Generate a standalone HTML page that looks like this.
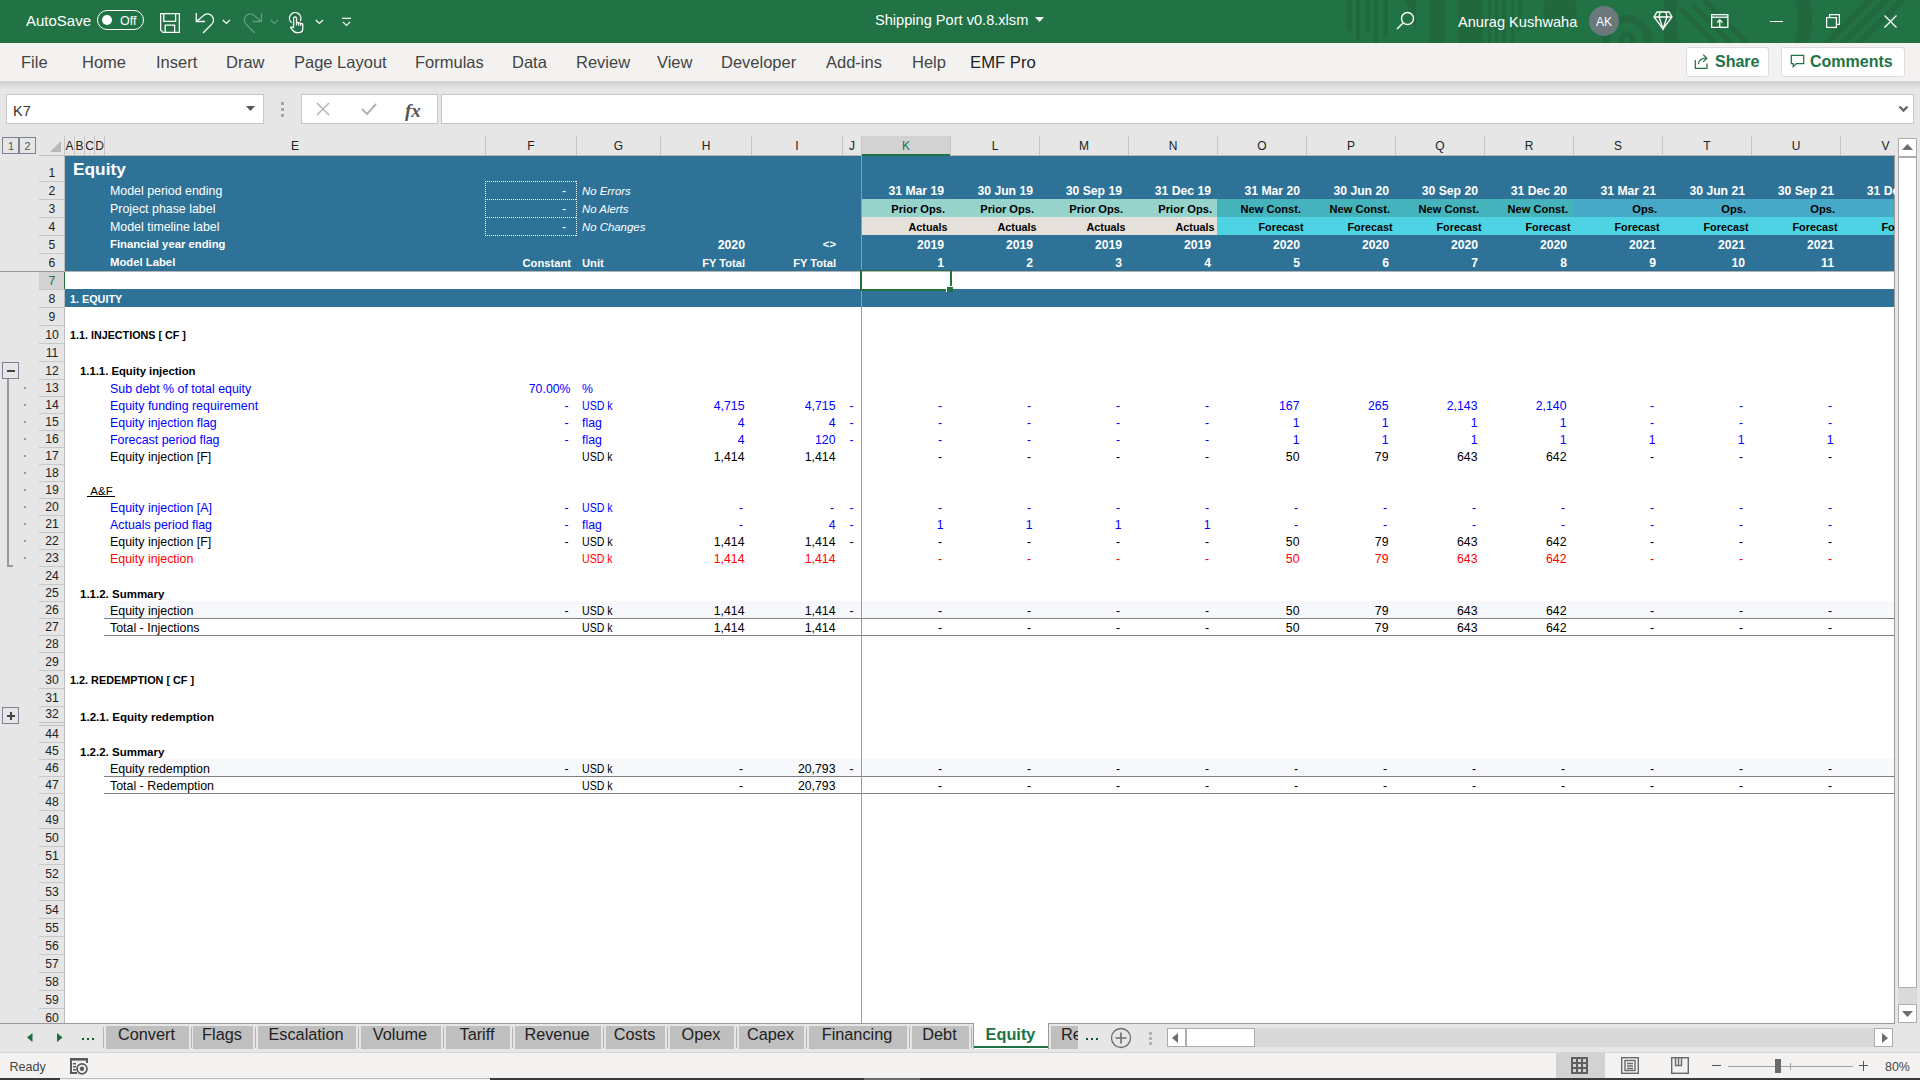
<!DOCTYPE html><html><head><meta charset="utf-8"><style>
html,body{margin:0;padding:0;width:1920px;height:1080px;overflow:hidden;background:#fff;font-family:"Liberation Sans", sans-serif;}
.t{position:absolute;white-space:pre;line-height:1;}
.r{position:absolute;}
svg{position:absolute;overflow:visible;}
</style></head><body>
<div class="r" style="left:0px;top:0px;width:1920px;height:43px;background:#217346;"></div>
<svg style="left:0;top:0" width="1920" height="43"><defs><clipPath id="tb"><rect x="0" y="0" width="1920" height="43"/></clipPath></defs><g clip-path="url(#tb)" fill="#22683f" stroke="none"><rect x="1347" y="0" width="5" height="31"/><rect x="1356" y="0" width="4" height="40"/><rect x="1365" y="0" width="5" height="31"/><rect x="1374" y="0" width="4" height="43"/><rect x="1383" y="0" width="5" height="37"/><path d="M1405 0 H1416 L1416 30 Z"/><rect x="1429" y="0" width="16" height="43"/><rect x="1458" y="0" width="25" height="43"/><rect x="1488" y="0" width="3" height="43"/><rect x="1495" y="0" width="3" height="43"/><rect x="1502" y="0" width="4" height="43"/><rect x="1511" y="0" width="3" height="43"/><rect x="1518" y="0" width="4" height="30"/><circle cx="1560" cy="10" r="17"/></g><g clip-path="url(#tb)" fill="none" stroke="#22683f"><circle cx="1627" cy="40" r="21" stroke-width="8"/><circle cx="1627" cy="40" r="6" stroke-width="6"/><circle cx="1737" cy="20" r="68" stroke-width="14"/><path d="M1680 8 L1720 48 M1692 4 L1736 48 M1704 0 L1752 48" stroke-width="5"/><path d="M1822 48 L1880 -10 M1838 48 L1896 -10 M1854 48 L1912 -10" stroke-width="6"/></g></svg>
<div class="t" style="top:12.90px;font-size:15.0px;color:#fff;left:26px;">AutoSave</div>
<div class="r" style="left:97px;top:10px;width:47px;height:20px;border:1.5px solid #fff;border-radius:11px;box-sizing:border-box;"></div>
<div class="r" style="left:102px;top:15px;width:10px;height:10px;border-radius:50%;background:#fff;"></div>
<div class="t" style="top:15.42px;font-size:12.5px;color:#fff;left:120px;">Off</div>
<svg style="left:160px;top:13px" width="21" height="21" viewBox="0 0 21 21"><g fill="none" stroke="#fff" stroke-width="1.3"><path d="M0.65 0.65 H19.35 V19.35 H3 L0.65 17 Z"/><path d="M3.8 0.65 V8.4 H15.6 V0.65"/><path d="M5.2 19.35 V12.1 H14.6 V19.35"/></g></svg>
<svg style="left:195px;top:12px" width="22" height="22" viewBox="0 0 22 22"><g fill="none" stroke="#fff" stroke-width="1.3"><path d="M1.8 9.3 L8.1 3.9 A6 6 0 1 1 16.2 12.7 L8 21"/><path d="M1.3 1 V9.5 H10"/></g></svg>
<svg style="left:222px;top:19px" width="9" height="6" viewBox="0 0 9 6"><path d="M0.8 1 L4.4 4.5 L8 1" fill="none" stroke="#fff" stroke-width="1.2"/></svg>
<svg style="left:243px;top:12px" width="22" height="22" viewBox="0 0 22 22"><g fill="none" stroke="#5f9e7a" stroke-width="1.3"><path d="M18 9.3 L11.7 3.9 A6 6 0 1 0 3.6 12.7 L11.8 21"/><path d="M18.5 1 V9.5 H9.8"/></g></svg>
<svg style="left:270px;top:19px" width="9" height="6" viewBox="0 0 9 6"><path d="M0.8 1 L4.4 4.5 L8 1" fill="none" stroke="#5f9e7a" stroke-width="1.2"/></svg>
<svg style="left:280px;top:8px" width="30" height="30" viewBox="0 0 30 30"><g fill="none" stroke="#fff" stroke-width="1.25" stroke-linecap="round" stroke-linejoin="round"><path d="M11.3 14.4 A5.7 5.7 0 1 1 20.4 12.6"/><path d="M13.6 19.2 V10.3 A1.45 1.45 0 0 1 16.5 10.3 V16.8 M16.5 15.4 A1.05 1.05 0 0 1 18.6 15.4 V17 M18.6 15.9 A1.05 1.05 0 0 1 20.7 15.9 V17.4 M20.7 16.4 A1.05 1.05 0 0 1 22.8 16.4 V20.5 Q22.8 24.6 18.6 24.6 H17 Q14.4 24.6 12.4 22 L10.6 19.6 Q11.6 18.2 13.6 19.6"/></g></svg>
<svg style="left:315px;top:19px" width="9" height="6" viewBox="0 0 9 6"><path d="M0.8 1 L4.4 4.5 L8 1" fill="none" stroke="#fff" stroke-width="1.2"/></svg>
<svg style="left:342px;top:17px" width="10" height="10" viewBox="0 0 10 10"><g fill="none" stroke="#fff" stroke-width="1.2"><path d="M0 1.3 H9"/><path d="M0.8 4.8 L4.5 8.5 L8.2 4.8"/></g></svg>
<div class="t" style="top:13.14px;font-size:14.6px;color:#fff;left:875px;">Shipping Port v0.8.xlsm</div>
<svg style="left:1035px;top:17px" width="9" height="6" viewBox="0 0 9 6"><path d="M0 0 H9 L4.5 5 Z" fill="#fff"/></svg>
<svg style="left:1396px;top:11px" width="20" height="20" viewBox="0 0 20 20"><g fill="none" stroke="#fff" stroke-width="1.4"><circle cx="11.5" cy="7.5" r="6"/><path d="M7.3 11.7 L1 18"/></g></svg>
<div class="t" style="top:14.84px;font-size:14.6px;color:#fff;left:1458px;">Anurag Kushwaha</div>
<div class="r" style="left:1589px;top:6px;width:30px;height:30px;border-radius:50%;background:#6b797d;"></div>
<div class="t" style="top:15.84px;font-size:12px;color:#fff;left:1304px;width:600px;text-align:center;">AK</div>
<svg style="left:1653px;top:11px" width="20" height="19" viewBox="0 0 20 19"><g fill="none" stroke="#fff" stroke-width="1.3"><path d="M4 1 H16 L19 6 L10 18 L1 6 Z"/><path d="M1 6 H19 M7 1 L6 6 L10 18 L14 6 L13 1"/></g></svg>
<svg style="left:1711px;top:14px" width="18" height="14" viewBox="0 0 18 14"><g fill="none" stroke="#fff" stroke-width="1.3"><rect x="0.65" y="0.65" width="16.2" height="12.7"/><path d="M0.65 3.2 H16.85"/><path d="M8.75 13 V6 M6 8.6 L8.75 5.8 L11.5 8.6"/></g></svg>
<div class="r" style="left:1770px;top:21px;width:13px;height:1px;background:#fff;"></div>
<svg style="left:1826px;top:14px" width="14" height="14" viewBox="0 0 14 14"><g fill="none" stroke="#fff" stroke-width="1.2"><rect x="0.6" y="3.6" width="9.8" height="9.8"/><path d="M3.6 3.6 V0.6 H13.4 V10.4 H10.4"/></g></svg>
<svg style="left:1884px;top:15px" width="13" height="13" viewBox="0 0 13 13"><g stroke="#fff" stroke-width="1.25"><path d="M0.5 0.5 L12.5 12.5 M12.5 0.5 L0.5 12.5"/></g></svg>
<div class="r" style="left:0px;top:43px;width:1920px;height:38px;background:#f3f2f1;"></div>
<div class="r" style="left:0;top:81px;width:1920px;height:8px;background:linear-gradient(#cfcecd,#e6e6e6);"></div>
<div class="t" style="top:54.03px;font-size:16.5px;color:#444;left:21px;">File</div>
<div class="t" style="top:54.03px;font-size:16.5px;color:#444;left:82px;">Home</div>
<div class="t" style="top:54.03px;font-size:16.5px;color:#444;left:156px;">Insert</div>
<div class="t" style="top:54.03px;font-size:16.5px;color:#444;left:226px;">Draw</div>
<div class="t" style="top:54.03px;font-size:16.5px;color:#444;left:294px;">Page Layout</div>
<div class="t" style="top:54.03px;font-size:16.5px;color:#444;left:415px;">Formulas</div>
<div class="t" style="top:54.03px;font-size:16.5px;color:#444;left:512px;">Data</div>
<div class="t" style="top:54.03px;font-size:16.5px;color:#444;left:576px;">Review</div>
<div class="t" style="top:54.03px;font-size:16.5px;color:#444;left:657px;">View</div>
<div class="t" style="top:54.03px;font-size:16.5px;color:#444;left:721px;">Developer</div>
<div class="t" style="top:54.03px;font-size:16.5px;color:#444;left:826px;">Add-ins</div>
<div class="t" style="top:54.03px;font-size:16.5px;color:#444;left:912px;">Help</div>
<div class="t" style="top:54.86px;font-size:16.7px;color:#222;left:970px;">EMF Pro</div>
<div class="r" style="left:1686px;top:47px;width:83px;height:30px;background:#fff;border:1px solid #dedcda;border-radius:3px;box-sizing:border-box;"></div>
<div class="r" style="left:1781px;top:47px;width:124px;height:30px;background:#fff;border:1px solid #dedcda;border-radius:3px;box-sizing:border-box;"></div>
<svg style="left:1694px;top:52px" width="17" height="18" viewBox="0 0 17 18"><g fill="none" stroke="#217346" stroke-width="1.25"><path d="M1.3 8 V16.3 H13 V11.5"/><path d="M4.3 12.3 Q5 6.2 12 6.2"/><path d="M9.2 2.6 L12.8 6.2 L9.2 9.8"/></g></svg>
<div class="t" style="top:54.26px;font-size:16px;font-weight:700;color:#217346;left:1715px;">Share</div>
<svg style="left:1790px;top:54px" width="16" height="15" viewBox="0 0 16 15"><g fill="none" stroke="#217346" stroke-width="1.25"><path d="M1.3 1.3 H13.7 V9.6 H6.3 L3.2 12.8 V9.6 H1.3 Z"/></g></svg>
<div class="t" style="top:54.26px;font-size:16px;font-weight:700;color:#217346;left:1810px;">Comments</div>
<div class="r" style="left:0px;top:89px;width:1920px;height:47px;background:#e6e6e6;"></div>
<div class="r" style="left:6px;top:94px;width:258px;height:30px;background:#fff;border:1px solid #c6c6c6;box-sizing:border-box;"></div>
<div class="t" style="top:103.64px;font-size:14.6px;color:#333;left:13px;">K7</div>
<svg style="left:246px;top:106px" width="9" height="5"><path d="M0 0 H9 L4.5 5 Z" fill="#555"/></svg>
<div class="r" style="left:281px;top:102px;width:3px;height:3px;background:#a6a6a6;"></div>
<div class="r" style="left:281px;top:108px;width:3px;height:3px;background:#a6a6a6;"></div>
<div class="r" style="left:281px;top:114px;width:3px;height:3px;background:#a6a6a6;"></div>
<div class="r" style="left:301px;top:94px;width:137px;height:30px;background:#fff;border:1px solid #c6c6c6;box-sizing:border-box;"></div>
<svg style="left:316px;top:102px" width="14" height="14"><path d="M1 1 L13 13 M13 1 L1 13" stroke="#b4b4b4" stroke-width="1.5"/></svg>
<svg style="left:361px;top:102px" width="16" height="14"><path d="M1 7 L6 12 L15 2" fill="none" stroke="#b4b4b4" stroke-width="2"/></svg>
<div class="t" style="top:101.42px;font-size:19px;color:#555;font-style:italic;left:405px;font-family:'Liberation Serif',serif;font-weight:700;">fx</div>
<div class="r" style="left:441px;top:94px;width:1473px;height:30px;background:#fff;border:1px solid #c6c6c6;box-sizing:border-box;"></div>
<svg style="left:1898px;top:105px" width="11" height="8"><path d="M1.5 1.5 L5.5 5.5 L9.5 1.5" fill="none" stroke="#666" stroke-width="2.4"/></svg>
<div class="r" style="left:0px;top:136px;width:1920px;height:20px;background:#e6e6e6;"></div>
<div class="r" style="left:2px;top:137px;width:34px;height:17px;border:1px solid #7b8391;box-sizing:border-box;"></div>
<div class="r" style="left:18px;top:137px;width:2px;height:17px;background:#7b8391;"></div>
<div class="t" style="top:140.86px;font-size:10.8px;color:#555;left:-289px;width:600px;text-align:center;">1</div>
<div class="t" style="top:140.86px;font-size:10.8px;color:#555;left:-272.5px;width:600px;text-align:center;">2</div>
<svg style="left:50px;top:141px" width="11" height="11"><path d="M11 0 V11 H0 Z" fill="#b7b7b7"/></svg>
<div class="r" style="left:39px;top:155px;width:25px;height:1px;background:#bdbdbd;"></div>
<div class="r" style="left:862px;top:136px;width:88px;height:18px;background:#d2d2d2;"></div>
<div class="r" style="left:74px;top:136px;width:1px;height:19px;background:#c6c6c6;"></div>
<div class="t" style="top:139.84px;font-size:12px;color:#222;left:-230.5px;width:600px;text-align:center;">A</div>
<div class="r" style="left:84px;top:136px;width:1px;height:19px;background:#c6c6c6;"></div>
<div class="t" style="top:139.84px;font-size:12px;color:#222;left:-220.5px;width:600px;text-align:center;">B</div>
<div class="r" style="left:94px;top:136px;width:1px;height:19px;background:#c6c6c6;"></div>
<div class="t" style="top:139.84px;font-size:12px;color:#222;left:-210.5px;width:600px;text-align:center;">C</div>
<div class="r" style="left:104px;top:136px;width:1px;height:19px;background:#c6c6c6;"></div>
<div class="t" style="top:139.84px;font-size:12px;color:#222;left:-200.5px;width:600px;text-align:center;">D</div>
<div class="r" style="left:485px;top:136px;width:1px;height:19px;background:#c6c6c6;"></div>
<div class="t" style="top:139.84px;font-size:12px;color:#222;left:-5.0px;width:600px;text-align:center;">E</div>
<div class="r" style="left:576px;top:136px;width:1px;height:19px;background:#c6c6c6;"></div>
<div class="t" style="top:139.84px;font-size:12px;color:#222;left:231.0px;width:600px;text-align:center;">F</div>
<div class="r" style="left:660px;top:136px;width:1px;height:19px;background:#c6c6c6;"></div>
<div class="t" style="top:139.84px;font-size:12px;color:#222;left:318.5px;width:600px;text-align:center;">G</div>
<div class="r" style="left:751px;top:136px;width:1px;height:19px;background:#c6c6c6;"></div>
<div class="t" style="top:139.84px;font-size:12px;color:#222;left:406.0px;width:600px;text-align:center;">H</div>
<div class="r" style="left:842px;top:136px;width:1px;height:19px;background:#c6c6c6;"></div>
<div class="t" style="top:139.84px;font-size:12px;color:#222;left:497.0px;width:600px;text-align:center;">I</div>
<div class="r" style="left:861px;top:136px;width:1px;height:19px;background:#c6c6c6;"></div>
<div class="t" style="top:139.84px;font-size:12px;color:#222;left:552.0px;width:600px;text-align:center;">J</div>
<div class="r" style="left:950px;top:136px;width:1px;height:19px;background:#c6c6c6;"></div>
<div class="t" style="top:139.84px;font-size:12px;color:#217346;left:606.0px;width:600px;text-align:center;">K</div>
<div class="r" style="left:1039px;top:136px;width:1px;height:19px;background:#c6c6c6;"></div>
<div class="t" style="top:139.84px;font-size:12px;color:#222;left:695.0px;width:600px;text-align:center;">L</div>
<div class="r" style="left:1128px;top:136px;width:1px;height:19px;background:#c6c6c6;"></div>
<div class="t" style="top:139.84px;font-size:12px;color:#222;left:784.0px;width:600px;text-align:center;">M</div>
<div class="r" style="left:1217px;top:136px;width:1px;height:19px;background:#c6c6c6;"></div>
<div class="t" style="top:139.84px;font-size:12px;color:#222;left:873.0px;width:600px;text-align:center;">N</div>
<div class="r" style="left:1306px;top:136px;width:1px;height:19px;background:#c6c6c6;"></div>
<div class="t" style="top:139.84px;font-size:12px;color:#222;left:962.0px;width:600px;text-align:center;">O</div>
<div class="r" style="left:1395px;top:136px;width:1px;height:19px;background:#c6c6c6;"></div>
<div class="t" style="top:139.84px;font-size:12px;color:#222;left:1051.0px;width:600px;text-align:center;">P</div>
<div class="r" style="left:1484px;top:136px;width:1px;height:19px;background:#c6c6c6;"></div>
<div class="t" style="top:139.84px;font-size:12px;color:#222;left:1140.0px;width:600px;text-align:center;">Q</div>
<div class="r" style="left:1573px;top:136px;width:1px;height:19px;background:#c6c6c6;"></div>
<div class="t" style="top:139.84px;font-size:12px;color:#222;left:1229.0px;width:600px;text-align:center;">R</div>
<div class="r" style="left:1662px;top:136px;width:1px;height:19px;background:#c6c6c6;"></div>
<div class="t" style="top:139.84px;font-size:12px;color:#222;left:1318.0px;width:600px;text-align:center;">S</div>
<div class="r" style="left:1751px;top:136px;width:1px;height:19px;background:#c6c6c6;"></div>
<div class="t" style="top:139.84px;font-size:12px;color:#222;left:1407.0px;width:600px;text-align:center;">T</div>
<div class="r" style="left:1840px;top:136px;width:1px;height:19px;background:#c6c6c6;"></div>
<div class="t" style="top:139.84px;font-size:12px;color:#222;left:1496.0px;width:600px;text-align:center;">U</div>
<div class="t" style="top:139.84px;font-size:12px;color:#222;left:1585.5px;width:600px;text-align:center;">V</div>
<div class="r" style="left:64px;top:136px;width:1px;height:19px;background:#c6c6c6;"></div>
<div class="r" style="left:64px;top:155px;width:1830px;height:1px;background:#bab6b4;"></div>
<div class="r" style="left:862px;top:154px;width:88px;height:2px;background:#217346;"></div>
<div class="r" style="left:0px;top:156px;width:64px;height:867px;background:#e6e6e6;"></div>
<div class="r" style="left:64px;top:156px;width:1px;height:867px;background:#bdbdbd;"></div>
<div class="r" style="left:39px;top:181px;width:25px;height:1px;background:#c8c8c8;"></div>
<div class="t" style="top:166.67px;font-size:12.2px;color:#222;left:-248px;width:600px;text-align:center;">1</div>
<div class="r" style="left:39px;top:199px;width:25px;height:1px;background:#c8c8c8;"></div>
<div class="t" style="top:184.67px;font-size:12.2px;color:#222;left:-248px;width:600px;text-align:center;">2</div>
<div class="r" style="left:39px;top:217px;width:25px;height:1px;background:#c8c8c8;"></div>
<div class="t" style="top:202.67px;font-size:12.2px;color:#222;left:-248px;width:600px;text-align:center;">3</div>
<div class="r" style="left:39px;top:235px;width:25px;height:1px;background:#c8c8c8;"></div>
<div class="t" style="top:220.67px;font-size:12.2px;color:#222;left:-248px;width:600px;text-align:center;">4</div>
<div class="r" style="left:39px;top:253px;width:25px;height:1px;background:#c8c8c8;"></div>
<div class="t" style="top:238.67px;font-size:12.2px;color:#222;left:-248px;width:600px;text-align:center;">5</div>
<div class="r" style="left:39px;top:271px;width:25px;height:1px;background:#c8c8c8;"></div>
<div class="t" style="top:256.67px;font-size:12.2px;color:#222;left:-248px;width:600px;text-align:center;">6</div>
<div class="r" style="left:39px;top:289px;width:25px;height:1px;background:#c8c8c8;"></div>
<div class="r" style="left:39px;top:272px;width:25px;height:17px;background:#d2d2d2;"></div>
<div class="t" style="top:274.67px;font-size:12.2px;color:#217346;left:-248px;width:600px;text-align:center;">7</div>
<div class="r" style="left:39px;top:307px;width:25px;height:1px;background:#c8c8c8;"></div>
<div class="t" style="top:292.67px;font-size:12.2px;color:#222;left:-248px;width:600px;text-align:center;">8</div>
<div class="r" style="left:39px;top:325px;width:25px;height:1px;background:#c8c8c8;"></div>
<div class="t" style="top:310.67px;font-size:12.2px;color:#222;left:-248px;width:600px;text-align:center;">9</div>
<div class="r" style="left:39px;top:343px;width:25px;height:1px;background:#c8c8c8;"></div>
<div class="t" style="top:328.67px;font-size:12.2px;color:#222;left:-248px;width:600px;text-align:center;">10</div>
<div class="r" style="left:39px;top:361px;width:25px;height:1px;background:#c8c8c8;"></div>
<div class="t" style="top:346.67px;font-size:12.2px;color:#222;left:-248px;width:600px;text-align:center;">11</div>
<div class="r" style="left:39px;top:379px;width:25px;height:1px;background:#c8c8c8;"></div>
<div class="t" style="top:364.67px;font-size:12.2px;color:#222;left:-248px;width:600px;text-align:center;">12</div>
<div class="r" style="left:39px;top:396px;width:25px;height:1px;background:#c8c8c8;"></div>
<div class="t" style="top:381.67px;font-size:12.2px;color:#222;left:-248px;width:600px;text-align:center;">13</div>
<div class="r" style="left:39px;top:413px;width:25px;height:1px;background:#c8c8c8;"></div>
<div class="t" style="top:398.67px;font-size:12.2px;color:#222;left:-248px;width:600px;text-align:center;">14</div>
<div class="r" style="left:39px;top:430px;width:25px;height:1px;background:#c8c8c8;"></div>
<div class="t" style="top:415.67px;font-size:12.2px;color:#222;left:-248px;width:600px;text-align:center;">15</div>
<div class="r" style="left:39px;top:447px;width:25px;height:1px;background:#c8c8c8;"></div>
<div class="t" style="top:432.67px;font-size:12.2px;color:#222;left:-248px;width:600px;text-align:center;">16</div>
<div class="r" style="left:39px;top:464px;width:25px;height:1px;background:#c8c8c8;"></div>
<div class="t" style="top:449.67px;font-size:12.2px;color:#222;left:-248px;width:600px;text-align:center;">17</div>
<div class="r" style="left:39px;top:481px;width:25px;height:1px;background:#c8c8c8;"></div>
<div class="t" style="top:466.67px;font-size:12.2px;color:#222;left:-248px;width:600px;text-align:center;">18</div>
<div class="r" style="left:39px;top:498px;width:25px;height:1px;background:#c8c8c8;"></div>
<div class="t" style="top:483.67px;font-size:12.2px;color:#222;left:-248px;width:600px;text-align:center;">19</div>
<div class="r" style="left:39px;top:515px;width:25px;height:1px;background:#c8c8c8;"></div>
<div class="t" style="top:500.67px;font-size:12.2px;color:#222;left:-248px;width:600px;text-align:center;">20</div>
<div class="r" style="left:39px;top:532px;width:25px;height:1px;background:#c8c8c8;"></div>
<div class="t" style="top:517.67px;font-size:12.2px;color:#222;left:-248px;width:600px;text-align:center;">21</div>
<div class="r" style="left:39px;top:549px;width:25px;height:1px;background:#c8c8c8;"></div>
<div class="t" style="top:534.67px;font-size:12.2px;color:#222;left:-248px;width:600px;text-align:center;">22</div>
<div class="r" style="left:39px;top:566px;width:25px;height:1px;background:#c8c8c8;"></div>
<div class="t" style="top:551.67px;font-size:12.2px;color:#222;left:-248px;width:600px;text-align:center;">23</div>
<div class="r" style="left:39px;top:584px;width:25px;height:1px;background:#c8c8c8;"></div>
<div class="t" style="top:569.67px;font-size:12.2px;color:#222;left:-248px;width:600px;text-align:center;">24</div>
<div class="r" style="left:39px;top:601px;width:25px;height:1px;background:#c8c8c8;"></div>
<div class="t" style="top:586.67px;font-size:12.2px;color:#222;left:-248px;width:600px;text-align:center;">25</div>
<div class="r" style="left:39px;top:618px;width:25px;height:1px;background:#c8c8c8;"></div>
<div class="t" style="top:603.67px;font-size:12.2px;color:#222;left:-248px;width:600px;text-align:center;">26</div>
<div class="r" style="left:39px;top:635px;width:25px;height:1px;background:#c8c8c8;"></div>
<div class="t" style="top:620.67px;font-size:12.2px;color:#222;left:-248px;width:600px;text-align:center;">27</div>
<div class="r" style="left:39px;top:652px;width:25px;height:1px;background:#c8c8c8;"></div>
<div class="t" style="top:637.67px;font-size:12.2px;color:#222;left:-248px;width:600px;text-align:center;">28</div>
<div class="r" style="left:39px;top:670px;width:25px;height:1px;background:#c8c8c8;"></div>
<div class="t" style="top:655.67px;font-size:12.2px;color:#222;left:-248px;width:600px;text-align:center;">29</div>
<div class="r" style="left:39px;top:688px;width:25px;height:1px;background:#c8c8c8;"></div>
<div class="t" style="top:673.67px;font-size:12.2px;color:#222;left:-248px;width:600px;text-align:center;">30</div>
<div class="r" style="left:39px;top:706px;width:25px;height:1px;background:#c8c8c8;"></div>
<div class="t" style="top:691.67px;font-size:12.2px;color:#222;left:-248px;width:600px;text-align:center;">31</div>
<div class="r" style="left:39px;top:722px;width:25px;height:1px;background:#c8c8c8;"></div>
<div class="t" style="top:707.67px;font-size:12.2px;color:#222;left:-248px;width:600px;text-align:center;">32</div>
<div class="r" style="left:39px;top:742px;width:25px;height:1px;background:#c8c8c8;"></div>
<div class="t" style="top:727.67px;font-size:12.2px;color:#222;left:-248px;width:600px;text-align:center;">44</div>
<div class="r" style="left:39px;top:759px;width:25px;height:1px;background:#c8c8c8;"></div>
<div class="t" style="top:744.67px;font-size:12.2px;color:#222;left:-248px;width:600px;text-align:center;">45</div>
<div class="r" style="left:39px;top:776px;width:25px;height:1px;background:#c8c8c8;"></div>
<div class="t" style="top:761.67px;font-size:12.2px;color:#222;left:-248px;width:600px;text-align:center;">46</div>
<div class="r" style="left:39px;top:793px;width:25px;height:1px;background:#c8c8c8;"></div>
<div class="t" style="top:778.67px;font-size:12.2px;color:#222;left:-248px;width:600px;text-align:center;">47</div>
<div class="r" style="left:39px;top:810px;width:25px;height:1px;background:#c8c8c8;"></div>
<div class="t" style="top:795.67px;font-size:12.2px;color:#222;left:-248px;width:600px;text-align:center;">48</div>
<div class="r" style="left:39px;top:828px;width:25px;height:1px;background:#c8c8c8;"></div>
<div class="t" style="top:813.67px;font-size:12.2px;color:#222;left:-248px;width:600px;text-align:center;">49</div>
<div class="r" style="left:39px;top:846px;width:25px;height:1px;background:#c8c8c8;"></div>
<div class="t" style="top:831.67px;font-size:12.2px;color:#222;left:-248px;width:600px;text-align:center;">50</div>
<div class="r" style="left:39px;top:864px;width:25px;height:1px;background:#c8c8c8;"></div>
<div class="t" style="top:849.67px;font-size:12.2px;color:#222;left:-248px;width:600px;text-align:center;">51</div>
<div class="r" style="left:39px;top:882px;width:25px;height:1px;background:#c8c8c8;"></div>
<div class="t" style="top:867.67px;font-size:12.2px;color:#222;left:-248px;width:600px;text-align:center;">52</div>
<div class="r" style="left:39px;top:900px;width:25px;height:1px;background:#c8c8c8;"></div>
<div class="t" style="top:885.67px;font-size:12.2px;color:#222;left:-248px;width:600px;text-align:center;">53</div>
<div class="r" style="left:39px;top:918px;width:25px;height:1px;background:#c8c8c8;"></div>
<div class="t" style="top:903.67px;font-size:12.2px;color:#222;left:-248px;width:600px;text-align:center;">54</div>
<div class="r" style="left:39px;top:936px;width:25px;height:1px;background:#c8c8c8;"></div>
<div class="t" style="top:921.67px;font-size:12.2px;color:#222;left:-248px;width:600px;text-align:center;">55</div>
<div class="r" style="left:39px;top:954px;width:25px;height:1px;background:#c8c8c8;"></div>
<div class="t" style="top:939.67px;font-size:12.2px;color:#222;left:-248px;width:600px;text-align:center;">56</div>
<div class="r" style="left:39px;top:972px;width:25px;height:1px;background:#c8c8c8;"></div>
<div class="t" style="top:957.67px;font-size:12.2px;color:#222;left:-248px;width:600px;text-align:center;">57</div>
<div class="r" style="left:39px;top:990px;width:25px;height:1px;background:#c8c8c8;"></div>
<div class="t" style="top:975.67px;font-size:12.2px;color:#222;left:-248px;width:600px;text-align:center;">58</div>
<div class="r" style="left:39px;top:1008px;width:25px;height:1px;background:#c8c8c8;"></div>
<div class="t" style="top:993.67px;font-size:12.2px;color:#222;left:-248px;width:600px;text-align:center;">59</div>
<div class="r" style="left:39px;top:1026px;width:25px;height:1px;background:#c8c8c8;"></div>
<div class="t" style="top:1011.67px;font-size:12.2px;color:#222;left:-248px;width:600px;text-align:center;">60</div>
<div class="r" style="left:39px;top:722px;width:25px;height:4px;background:#e6e6e6;"></div>
<div class="r" style="left:39px;top:722px;width:25px;height:1px;background:#c0c0c0;"></div>
<div class="r" style="left:39px;top:725px;width:25px;height:1px;background:#c0c0c0;"></div>
<div class="r" style="left:64px;top:272px;width:2px;height:17px;background:#217346;"></div>
<div class="r" style="left:0px;top:271px;width:64px;height:1px;background:#9a9a9a;"></div>
<div class="r" style="left:2px;top:362px;width:17px;height:17px;border:1px solid #7b8391;box-sizing:border-box;"></div>
<div class="r" style="left:7px;top:370px;width:8px;height:2px;background:#444;"></div>
<div class="r" style="left:7px;top:379px;width:2px;height:188px;background:#9a9a9a;"></div>
<div class="r" style="left:7px;top:565px;width:6px;height:2px;background:#9a9a9a;"></div>
<div class="r" style="left:24px;top:387px;width:2px;height:2px;background:#9a9a9a;"></div>
<div class="r" style="left:24px;top:404px;width:2px;height:2px;background:#9a9a9a;"></div>
<div class="r" style="left:24px;top:421px;width:2px;height:2px;background:#9a9a9a;"></div>
<div class="r" style="left:24px;top:438px;width:2px;height:2px;background:#9a9a9a;"></div>
<div class="r" style="left:24px;top:455px;width:2px;height:2px;background:#9a9a9a;"></div>
<div class="r" style="left:24px;top:472px;width:2px;height:2px;background:#9a9a9a;"></div>
<div class="r" style="left:24px;top:489px;width:2px;height:2px;background:#9a9a9a;"></div>
<div class="r" style="left:24px;top:506px;width:2px;height:2px;background:#9a9a9a;"></div>
<div class="r" style="left:24px;top:523px;width:2px;height:2px;background:#9a9a9a;"></div>
<div class="r" style="left:24px;top:540px;width:2px;height:2px;background:#9a9a9a;"></div>
<div class="r" style="left:24px;top:557px;width:2px;height:2px;background:#9a9a9a;"></div>
<div class="r" style="left:2px;top:707px;width:17px;height:17px;border:1px solid #7b8391;box-sizing:border-box;"></div>
<div class="r" style="left:7px;top:715px;width:8px;height:2px;background:#444;"></div>
<div class="r" style="left:10px;top:712px;width:2px;height:8px;background:#444;"></div>
<div class="r" style="left:65px;top:156px;width:1829px;height:867px;background:#ffffff;"></div>
<div class="r" style="left:65px;top:156px;width:1829px;height:115px;background:#2e7298;"></div>
<div class="r" style="left:65px;top:271px;width:1829px;height:1px;background:#b4b4b4;"></div>
<div class="r" style="left:65px;top:289px;width:1829px;height:18px;background:#2e7298;"></div>
<div class="r" style="left:862px;top:199px;width:355px;height:18px;background:#95d3cb;"></div>
<div class="r" style="left:1217px;top:199px;width:356px;height:18px;background:#44b3bb;"></div>
<div class="r" style="left:1573px;top:199px;width:321px;height:18px;background:#45a9c7;"></div>
<div class="r" style="left:862px;top:217px;width:355px;height:18px;background:#e6e0da;"></div>
<div class="r" style="left:1217px;top:217px;width:677px;height:18px;background:#4dd3e3;"></div>
<div class="r" style="left:861px;top:155px;width:1px;height:868px;background:#9a9a9a;"></div>
<div class="r" style="left:1894px;top:155px;width:1px;height:868px;background:#9a9a9a;"></div>
<div class="r" style="left:65px;top:1023px;width:1830px;height:1px;background:#9a9a9a;"></div>
<div class="t" style="top:161.36px;font-size:17.3px;font-weight:700;color:#fff;left:73px;">Equity</div>
<div class="t" style="top:184.50px;font-size:12.4px;color:#fff;left:110px;">Model period ending</div>
<div class="t" style="top:202.50px;font-size:12.4px;color:#fff;left:110px;">Project phase label</div>
<div class="t" style="top:220.50px;font-size:12.4px;color:#fff;left:110px;">Model timeline label</div>
<div class="t" style="top:239.43px;font-size:11.3px;font-weight:700;color:#fff;left:110px;">Financial year ending</div>
<div class="t" style="top:257.43px;font-size:11.3px;font-weight:700;color:#fff;left:110px;">Model Label</div>
<div class="r" style="left:485px;top:181px;width:92px;height:1px;background:repeating-linear-gradient(90deg,#fff 0 1px,transparent 1px 2px);"></div>
<div class="r" style="left:485px;top:199px;width:92px;height:1px;background:repeating-linear-gradient(90deg,#fff 0 1px,transparent 1px 2px);"></div>
<div class="r" style="left:485px;top:217px;width:92px;height:1px;background:repeating-linear-gradient(90deg,#fff 0 1px,transparent 1px 2px);"></div>
<div class="r" style="left:485px;top:235px;width:92px;height:1px;background:repeating-linear-gradient(90deg,#fff 0 1px,transparent 1px 2px);"></div>
<div class="r" style="left:485px;top:181px;width:1px;height:55px;background:repeating-linear-gradient(180deg,#fff 0 1px,transparent 1px 2px);"></div>
<div class="r" style="left:576px;top:181px;width:1px;height:55px;background:repeating-linear-gradient(180deg,#fff 0 1px,transparent 1px 2px);"></div>
<div class="t" style="top:184.59px;font-size:12.3px;color:#fff;right:1354px;">-</div>
<div class="t" style="top:186.35px;font-size:11.4px;color:#fff;font-style:italic;left:582px;">No Errors</div>
<div class="t" style="top:202.59px;font-size:12.3px;color:#fff;right:1354px;">-</div>
<div class="t" style="top:204.35px;font-size:11.4px;color:#fff;font-style:italic;left:582px;">No Alerts</div>
<div class="t" style="top:220.59px;font-size:12.3px;color:#fff;right:1354px;">-</div>
<div class="t" style="top:222.35px;font-size:11.4px;color:#fff;font-style:italic;left:582px;">No Changes</div>
<div class="t" style="top:238.59px;font-size:12.3px;font-weight:700;color:#fff;right:1175px;">2020</div>
<div class="t" style="top:239.43px;font-size:11.3px;font-weight:700;color:#fff;right:1084px;">&lt;&gt;</div>
<div class="t" style="top:257.52px;font-size:11.2px;font-weight:700;color:#fff;right:1349px;">Constant</div>
<div class="t" style="top:257.52px;font-size:11.2px;font-weight:700;color:#fff;left:582px;">Unit</div>
<div class="t" style="top:257.60px;font-size:11.1px;font-weight:700;color:#fff;right:1175px;">FY Total</div>
<div class="t" style="top:257.60px;font-size:11.1px;font-weight:700;color:#fff;right:1084px;">FY Total</div>
<div class="t" style="top:184.67px;font-size:12.2px;font-weight:700;color:#fff;right:976px;">31 Mar 19</div>
<div class="t" style="top:203.60px;font-size:11.1px;font-weight:700;right:975px;">Prior Ops.</div>
<div class="t" style="top:221.86px;font-size:10.8px;font-weight:700;right:972.5px;">Actuals</div>
<div class="t" style="top:238.67px;font-size:12.2px;font-weight:700;color:#fff;right:976px;">2019</div>
<div class="t" style="top:256.67px;font-size:12.2px;font-weight:700;color:#fff;right:976px;">1</div>
<div class="t" style="top:184.67px;font-size:12.2px;font-weight:700;color:#fff;right:887px;">30 Jun 19</div>
<div class="t" style="top:203.60px;font-size:11.1px;font-weight:700;right:886px;">Prior Ops.</div>
<div class="t" style="top:221.86px;font-size:10.8px;font-weight:700;right:883.5px;">Actuals</div>
<div class="t" style="top:238.67px;font-size:12.2px;font-weight:700;color:#fff;right:887px;">2019</div>
<div class="t" style="top:256.67px;font-size:12.2px;font-weight:700;color:#fff;right:887px;">2</div>
<div class="t" style="top:184.67px;font-size:12.2px;font-weight:700;color:#fff;right:798px;">30 Sep 19</div>
<div class="t" style="top:203.60px;font-size:11.1px;font-weight:700;right:797px;">Prior Ops.</div>
<div class="t" style="top:221.86px;font-size:10.8px;font-weight:700;right:794.5px;">Actuals</div>
<div class="t" style="top:238.67px;font-size:12.2px;font-weight:700;color:#fff;right:798px;">2019</div>
<div class="t" style="top:256.67px;font-size:12.2px;font-weight:700;color:#fff;right:798px;">3</div>
<div class="t" style="top:184.67px;font-size:12.2px;font-weight:700;color:#fff;right:709px;">31 Dec 19</div>
<div class="t" style="top:203.60px;font-size:11.1px;font-weight:700;right:708px;">Prior Ops.</div>
<div class="t" style="top:221.86px;font-size:10.8px;font-weight:700;right:705.5px;">Actuals</div>
<div class="t" style="top:238.67px;font-size:12.2px;font-weight:700;color:#fff;right:709px;">2019</div>
<div class="t" style="top:256.67px;font-size:12.2px;font-weight:700;color:#fff;right:709px;">4</div>
<div class="t" style="top:184.67px;font-size:12.2px;font-weight:700;color:#fff;right:620px;">31 Mar 20</div>
<div class="t" style="top:203.60px;font-size:11.1px;font-weight:700;right:619px;">New Const.</div>
<div class="t" style="top:221.86px;font-size:10.8px;font-weight:700;right:616.5px;">Forecast</div>
<div class="t" style="top:238.67px;font-size:12.2px;font-weight:700;color:#fff;right:620px;">2020</div>
<div class="t" style="top:256.67px;font-size:12.2px;font-weight:700;color:#fff;right:620px;">5</div>
<div class="t" style="top:184.67px;font-size:12.2px;font-weight:700;color:#fff;right:531px;">30 Jun 20</div>
<div class="t" style="top:203.60px;font-size:11.1px;font-weight:700;right:530px;">New Const.</div>
<div class="t" style="top:221.86px;font-size:10.8px;font-weight:700;right:527.5px;">Forecast</div>
<div class="t" style="top:238.67px;font-size:12.2px;font-weight:700;color:#fff;right:531px;">2020</div>
<div class="t" style="top:256.67px;font-size:12.2px;font-weight:700;color:#fff;right:531px;">6</div>
<div class="t" style="top:184.67px;font-size:12.2px;font-weight:700;color:#fff;right:442px;">30 Sep 20</div>
<div class="t" style="top:203.60px;font-size:11.1px;font-weight:700;right:441px;">New Const.</div>
<div class="t" style="top:221.86px;font-size:10.8px;font-weight:700;right:438.5px;">Forecast</div>
<div class="t" style="top:238.67px;font-size:12.2px;font-weight:700;color:#fff;right:442px;">2020</div>
<div class="t" style="top:256.67px;font-size:12.2px;font-weight:700;color:#fff;right:442px;">7</div>
<div class="t" style="top:184.67px;font-size:12.2px;font-weight:700;color:#fff;right:353px;">31 Dec 20</div>
<div class="t" style="top:203.60px;font-size:11.1px;font-weight:700;right:352px;">New Const.</div>
<div class="t" style="top:221.86px;font-size:10.8px;font-weight:700;right:349.5px;">Forecast</div>
<div class="t" style="top:238.67px;font-size:12.2px;font-weight:700;color:#fff;right:353px;">2020</div>
<div class="t" style="top:256.67px;font-size:12.2px;font-weight:700;color:#fff;right:353px;">8</div>
<div class="t" style="top:184.67px;font-size:12.2px;font-weight:700;color:#fff;right:264px;">31 Mar 21</div>
<div class="t" style="top:203.60px;font-size:11.1px;font-weight:700;right:263px;">Ops.</div>
<div class="t" style="top:221.86px;font-size:10.8px;font-weight:700;right:260.5px;">Forecast</div>
<div class="t" style="top:238.67px;font-size:12.2px;font-weight:700;color:#fff;right:264px;">2021</div>
<div class="t" style="top:256.67px;font-size:12.2px;font-weight:700;color:#fff;right:264px;">9</div>
<div class="t" style="top:184.67px;font-size:12.2px;font-weight:700;color:#fff;right:175px;">30 Jun 21</div>
<div class="t" style="top:203.60px;font-size:11.1px;font-weight:700;right:174px;">Ops.</div>
<div class="t" style="top:221.86px;font-size:10.8px;font-weight:700;right:171.5px;">Forecast</div>
<div class="t" style="top:238.67px;font-size:12.2px;font-weight:700;color:#fff;right:175px;">2021</div>
<div class="t" style="top:256.67px;font-size:12.2px;font-weight:700;color:#fff;right:175px;">10</div>
<div class="t" style="top:184.67px;font-size:12.2px;font-weight:700;color:#fff;right:86px;">30 Sep 21</div>
<div class="t" style="top:203.60px;font-size:11.1px;font-weight:700;right:85px;">Ops.</div>
<div class="t" style="top:221.86px;font-size:10.8px;font-weight:700;right:82.5px;">Forecast</div>
<div class="t" style="top:238.67px;font-size:12.2px;font-weight:700;color:#fff;right:86px;">2021</div>
<div class="t" style="top:256.67px;font-size:12.2px;font-weight:700;color:#fff;right:86px;">11</div>
<div class="t" style="top:184.67px;font-size:12.2px;font-weight:700;color:#fff;right:-3px;">31 Dec 21</div>
<div class="t" style="top:203.60px;font-size:11.1px;font-weight:700;right:-4px;">Ops.</div>
<div class="t" style="top:221.86px;font-size:10.8px;font-weight:700;right:-6.5px;">Forecast</div>
<div class="t" style="top:238.67px;font-size:12.2px;font-weight:700;color:#fff;right:-3px;">2021</div>
<div class="t" style="top:256.67px;font-size:12.2px;font-weight:700;color:#fff;right:-3px;">12</div>
<div class="t" style="top:293.86px;font-size:10.8px;font-weight:700;color:#fff;left:70px;">1. EQUITY</div>
<div class="t" style="top:329.90px;font-size:10.75px;font-weight:700;left:70px;">1.1. INJECTIONS [ CF ]</div>
<div class="t" style="top:366.43px;font-size:11.3px;font-weight:700;left:80px;">1.1.1. Equity injection</div>
<div class="t" style="top:589.27px;font-size:11.5px;font-weight:700;left:80px;">1.1.2. Summary</div>
<div class="t" style="top:674.82px;font-size:10.85px;font-weight:700;left:70px;">1.2. REDEMPTION [ CF ]</div>
<div class="t" style="top:711.18px;font-size:11.6px;font-weight:700;left:80px;">1.2.1. Equity redemption</div>
<div class="t" style="top:747.27px;font-size:11.5px;font-weight:700;left:80px;">1.2.2. Summary</div>
<div class="t" style="top:486.07px;font-size:11.5px;left:90.3px;">A&amp;F</div>
<div class="r" style="left:87px;top:496px;width:28px;height:1px;background:#000;"></div>
<div class="r" style="left:104px;top:601px;width:1790px;height:17px;background:#f6f8fc;"></div>
<div class="r" style="left:104px;top:759px;width:1790px;height:17px;background:#f6f8fc;"></div>
<div class="r" style="left:104px;top:618px;width:1790px;height:1px;background:#808080;"></div>
<div class="r" style="left:104px;top:635px;width:1790px;height:1px;background:#808080;"></div>
<div class="r" style="left:104px;top:776px;width:1790px;height:1px;background:#808080;"></div>
<div class="r" style="left:104px;top:793px;width:1790px;height:1px;background:#808080;"></div>
<div class="r" style="left:861px;top:155px;width:1px;height:868px;background:#9a9a9a;"></div>
<div class="t" style="top:383.20px;font-size:12.4px;color:#0000ff;left:110px;">Sub debt % of total equity</div>
<div class="t" style="top:383.29px;font-size:12.3px;color:#0000ff;right:1349.5px;">70.00%</div>
<div class="t" style="top:383.29px;font-size:12.3px;color:#0000ff;left:582px;">%</div>
<div class="t" style="top:400.20px;font-size:12.4px;color:#0000ff;left:110px;">Equity funding requirement</div>
<div class="t" style="top:400.29px;font-size:12.3px;color:#0000ff;right:1351.5px;">-</div>
<div class="t" style="top:400.29px;font-size:12.3px;color:#0000ff;left:582px;transform:scaleX(0.86);transform-origin:0 0;">USD k</div>
<div class="t" style="top:400.29px;font-size:12.3px;color:#0000ff;right:1175.5px;">4,715</div>
<div class="t" style="top:400.29px;font-size:12.3px;color:#0000ff;right:1084.5px;">4,715</div>
<div class="t" style="top:400.29px;font-size:12.3px;color:#0000ff;right:1066.5px;">-</div>
<div class="t" style="top:400.29px;font-size:12.3px;color:#0000ff;right:978px;">-</div>
<div class="t" style="top:400.29px;font-size:12.3px;color:#0000ff;right:889px;">-</div>
<div class="t" style="top:400.29px;font-size:12.3px;color:#0000ff;right:800px;">-</div>
<div class="t" style="top:400.29px;font-size:12.3px;color:#0000ff;right:711px;">-</div>
<div class="t" style="top:400.29px;font-size:12.3px;color:#0000ff;right:620.5px;">167</div>
<div class="t" style="top:400.29px;font-size:12.3px;color:#0000ff;right:531.5px;">265</div>
<div class="t" style="top:400.29px;font-size:12.3px;color:#0000ff;right:442.5px;">2,143</div>
<div class="t" style="top:400.29px;font-size:12.3px;color:#0000ff;right:353.5px;">2,140</div>
<div class="t" style="top:400.29px;font-size:12.3px;color:#0000ff;right:266px;">-</div>
<div class="t" style="top:400.29px;font-size:12.3px;color:#0000ff;right:177px;">-</div>
<div class="t" style="top:400.29px;font-size:12.3px;color:#0000ff;right:88px;">-</div>
<div class="t" style="top:417.20px;font-size:12.4px;color:#0000ff;left:110px;">Equity injection flag</div>
<div class="t" style="top:417.29px;font-size:12.3px;color:#0000ff;right:1351.5px;">-</div>
<div class="t" style="top:417.29px;font-size:12.3px;color:#0000ff;left:582px;">flag</div>
<div class="t" style="top:417.29px;font-size:12.3px;color:#0000ff;right:1175.5px;">4</div>
<div class="t" style="top:417.29px;font-size:12.3px;color:#0000ff;right:1084.5px;">4</div>
<div class="t" style="top:417.29px;font-size:12.3px;color:#0000ff;right:1066.5px;">-</div>
<div class="t" style="top:417.29px;font-size:12.3px;color:#0000ff;right:978px;">-</div>
<div class="t" style="top:417.29px;font-size:12.3px;color:#0000ff;right:889px;">-</div>
<div class="t" style="top:417.29px;font-size:12.3px;color:#0000ff;right:800px;">-</div>
<div class="t" style="top:417.29px;font-size:12.3px;color:#0000ff;right:711px;">-</div>
<div class="t" style="top:417.29px;font-size:12.3px;color:#0000ff;right:620.5px;">1</div>
<div class="t" style="top:417.29px;font-size:12.3px;color:#0000ff;right:531.5px;">1</div>
<div class="t" style="top:417.29px;font-size:12.3px;color:#0000ff;right:442.5px;">1</div>
<div class="t" style="top:417.29px;font-size:12.3px;color:#0000ff;right:353.5px;">1</div>
<div class="t" style="top:417.29px;font-size:12.3px;color:#0000ff;right:266px;">-</div>
<div class="t" style="top:417.29px;font-size:12.3px;color:#0000ff;right:177px;">-</div>
<div class="t" style="top:417.29px;font-size:12.3px;color:#0000ff;right:88px;">-</div>
<div class="t" style="top:434.20px;font-size:12.4px;color:#0000ff;left:110px;">Forecast period flag</div>
<div class="t" style="top:434.29px;font-size:12.3px;color:#0000ff;right:1351.5px;">-</div>
<div class="t" style="top:434.29px;font-size:12.3px;color:#0000ff;left:582px;">flag</div>
<div class="t" style="top:434.29px;font-size:12.3px;color:#0000ff;right:1175.5px;">4</div>
<div class="t" style="top:434.29px;font-size:12.3px;color:#0000ff;right:1084.5px;">120</div>
<div class="t" style="top:434.29px;font-size:12.3px;color:#0000ff;right:1066.5px;">-</div>
<div class="t" style="top:434.29px;font-size:12.3px;color:#0000ff;right:978px;">-</div>
<div class="t" style="top:434.29px;font-size:12.3px;color:#0000ff;right:889px;">-</div>
<div class="t" style="top:434.29px;font-size:12.3px;color:#0000ff;right:800px;">-</div>
<div class="t" style="top:434.29px;font-size:12.3px;color:#0000ff;right:711px;">-</div>
<div class="t" style="top:434.29px;font-size:12.3px;color:#0000ff;right:620.5px;">1</div>
<div class="t" style="top:434.29px;font-size:12.3px;color:#0000ff;right:531.5px;">1</div>
<div class="t" style="top:434.29px;font-size:12.3px;color:#0000ff;right:442.5px;">1</div>
<div class="t" style="top:434.29px;font-size:12.3px;color:#0000ff;right:353.5px;">1</div>
<div class="t" style="top:434.29px;font-size:12.3px;color:#0000ff;right:264.5px;">1</div>
<div class="t" style="top:434.29px;font-size:12.3px;color:#0000ff;right:175.5px;">1</div>
<div class="t" style="top:434.29px;font-size:12.3px;color:#0000ff;right:86.5px;">1</div>
<div class="t" style="top:451.20px;font-size:12.4px;left:110px;">Equity injection [F]</div>
<div class="t" style="top:451.29px;font-size:12.3px;left:582px;transform:scaleX(0.86);transform-origin:0 0;">USD k</div>
<div class="t" style="top:451.29px;font-size:12.3px;right:1175.5px;">1,414</div>
<div class="t" style="top:451.29px;font-size:12.3px;right:1084.5px;">1,414</div>
<div class="t" style="top:451.29px;font-size:12.3px;right:978px;">-</div>
<div class="t" style="top:451.29px;font-size:12.3px;right:889px;">-</div>
<div class="t" style="top:451.29px;font-size:12.3px;right:800px;">-</div>
<div class="t" style="top:451.29px;font-size:12.3px;right:711px;">-</div>
<div class="t" style="top:451.29px;font-size:12.3px;right:620.5px;">50</div>
<div class="t" style="top:451.29px;font-size:12.3px;right:531.5px;">79</div>
<div class="t" style="top:451.29px;font-size:12.3px;right:442.5px;">643</div>
<div class="t" style="top:451.29px;font-size:12.3px;right:353.5px;">642</div>
<div class="t" style="top:451.29px;font-size:12.3px;right:266px;">-</div>
<div class="t" style="top:451.29px;font-size:12.3px;right:177px;">-</div>
<div class="t" style="top:451.29px;font-size:12.3px;right:88px;">-</div>
<div class="t" style="top:502.20px;font-size:12.4px;color:#0000ff;left:110px;">Equity injection [A]</div>
<div class="t" style="top:502.29px;font-size:12.3px;color:#0000ff;right:1351.5px;">-</div>
<div class="t" style="top:502.29px;font-size:12.3px;color:#0000ff;left:582px;transform:scaleX(0.86);transform-origin:0 0;">USD k</div>
<div class="t" style="top:502.29px;font-size:12.3px;color:#0000ff;right:1177px;">-</div>
<div class="t" style="top:502.29px;font-size:12.3px;color:#0000ff;right:1086px;">-</div>
<div class="t" style="top:502.29px;font-size:12.3px;color:#0000ff;right:1066.5px;">-</div>
<div class="t" style="top:502.29px;font-size:12.3px;color:#0000ff;right:978px;">-</div>
<div class="t" style="top:502.29px;font-size:12.3px;color:#0000ff;right:889px;">-</div>
<div class="t" style="top:502.29px;font-size:12.3px;color:#0000ff;right:800px;">-</div>
<div class="t" style="top:502.29px;font-size:12.3px;color:#0000ff;right:711px;">-</div>
<div class="t" style="top:502.29px;font-size:12.3px;color:#0000ff;right:622px;">-</div>
<div class="t" style="top:502.29px;font-size:12.3px;color:#0000ff;right:533px;">-</div>
<div class="t" style="top:502.29px;font-size:12.3px;color:#0000ff;right:444px;">-</div>
<div class="t" style="top:502.29px;font-size:12.3px;color:#0000ff;right:355px;">-</div>
<div class="t" style="top:502.29px;font-size:12.3px;color:#0000ff;right:266px;">-</div>
<div class="t" style="top:502.29px;font-size:12.3px;color:#0000ff;right:177px;">-</div>
<div class="t" style="top:502.29px;font-size:12.3px;color:#0000ff;right:88px;">-</div>
<div class="t" style="top:519.20px;font-size:12.4px;color:#0000ff;left:110px;">Actuals period flag</div>
<div class="t" style="top:519.29px;font-size:12.3px;color:#0000ff;right:1351.5px;">-</div>
<div class="t" style="top:519.29px;font-size:12.3px;color:#0000ff;left:582px;">flag</div>
<div class="t" style="top:519.29px;font-size:12.3px;color:#0000ff;right:1177px;">-</div>
<div class="t" style="top:519.29px;font-size:12.3px;color:#0000ff;right:1084.5px;">4</div>
<div class="t" style="top:519.29px;font-size:12.3px;color:#0000ff;right:1066.5px;">-</div>
<div class="t" style="top:519.29px;font-size:12.3px;color:#0000ff;right:976.5px;">1</div>
<div class="t" style="top:519.29px;font-size:12.3px;color:#0000ff;right:887.5px;">1</div>
<div class="t" style="top:519.29px;font-size:12.3px;color:#0000ff;right:798.5px;">1</div>
<div class="t" style="top:519.29px;font-size:12.3px;color:#0000ff;right:709.5px;">1</div>
<div class="t" style="top:519.29px;font-size:12.3px;color:#0000ff;right:622px;">-</div>
<div class="t" style="top:519.29px;font-size:12.3px;color:#0000ff;right:533px;">-</div>
<div class="t" style="top:519.29px;font-size:12.3px;color:#0000ff;right:444px;">-</div>
<div class="t" style="top:519.29px;font-size:12.3px;color:#0000ff;right:355px;">-</div>
<div class="t" style="top:519.29px;font-size:12.3px;color:#0000ff;right:266px;">-</div>
<div class="t" style="top:519.29px;font-size:12.3px;color:#0000ff;right:177px;">-</div>
<div class="t" style="top:519.29px;font-size:12.3px;color:#0000ff;right:88px;">-</div>
<div class="t" style="top:536.20px;font-size:12.4px;left:110px;">Equity injection [F]</div>
<div class="t" style="top:536.29px;font-size:12.3px;right:1351.5px;">-</div>
<div class="t" style="top:536.29px;font-size:12.3px;left:582px;transform:scaleX(0.86);transform-origin:0 0;">USD k</div>
<div class="t" style="top:536.29px;font-size:12.3px;right:1175.5px;">1,414</div>
<div class="t" style="top:536.29px;font-size:12.3px;right:1084.5px;">1,414</div>
<div class="t" style="top:536.29px;font-size:12.3px;right:1066.5px;">-</div>
<div class="t" style="top:536.29px;font-size:12.3px;right:978px;">-</div>
<div class="t" style="top:536.29px;font-size:12.3px;right:889px;">-</div>
<div class="t" style="top:536.29px;font-size:12.3px;right:800px;">-</div>
<div class="t" style="top:536.29px;font-size:12.3px;right:711px;">-</div>
<div class="t" style="top:536.29px;font-size:12.3px;right:620.5px;">50</div>
<div class="t" style="top:536.29px;font-size:12.3px;right:531.5px;">79</div>
<div class="t" style="top:536.29px;font-size:12.3px;right:442.5px;">643</div>
<div class="t" style="top:536.29px;font-size:12.3px;right:353.5px;">642</div>
<div class="t" style="top:536.29px;font-size:12.3px;right:266px;">-</div>
<div class="t" style="top:536.29px;font-size:12.3px;right:177px;">-</div>
<div class="t" style="top:536.29px;font-size:12.3px;right:88px;">-</div>
<div class="t" style="top:553.20px;font-size:12.4px;color:#ff0000;left:110px;">Equity injection</div>
<div class="t" style="top:553.29px;font-size:12.3px;color:#ff0000;left:582px;transform:scaleX(0.86);transform-origin:0 0;">USD k</div>
<div class="t" style="top:553.29px;font-size:12.3px;color:#ff0000;right:1175.5px;">1,414</div>
<div class="t" style="top:553.29px;font-size:12.3px;color:#ff0000;right:1084.5px;">1,414</div>
<div class="t" style="top:553.29px;font-size:12.3px;color:#ff0000;right:978px;">-</div>
<div class="t" style="top:553.29px;font-size:12.3px;color:#ff0000;right:889px;">-</div>
<div class="t" style="top:553.29px;font-size:12.3px;color:#ff0000;right:800px;">-</div>
<div class="t" style="top:553.29px;font-size:12.3px;color:#ff0000;right:711px;">-</div>
<div class="t" style="top:553.29px;font-size:12.3px;color:#ff0000;right:620.5px;">50</div>
<div class="t" style="top:553.29px;font-size:12.3px;color:#ff0000;right:531.5px;">79</div>
<div class="t" style="top:553.29px;font-size:12.3px;color:#ff0000;right:442.5px;">643</div>
<div class="t" style="top:553.29px;font-size:12.3px;color:#ff0000;right:353.5px;">642</div>
<div class="t" style="top:553.29px;font-size:12.3px;color:#ff0000;right:266px;">-</div>
<div class="t" style="top:553.29px;font-size:12.3px;color:#ff0000;right:177px;">-</div>
<div class="t" style="top:553.29px;font-size:12.3px;color:#ff0000;right:88px;">-</div>
<div class="t" style="top:605.20px;font-size:12.4px;left:110px;">Equity injection</div>
<div class="t" style="top:605.29px;font-size:12.3px;right:1351.5px;">-</div>
<div class="t" style="top:605.29px;font-size:12.3px;left:582px;transform:scaleX(0.86);transform-origin:0 0;">USD k</div>
<div class="t" style="top:605.29px;font-size:12.3px;right:1175.5px;">1,414</div>
<div class="t" style="top:605.29px;font-size:12.3px;right:1084.5px;">1,414</div>
<div class="t" style="top:605.29px;font-size:12.3px;right:1066.5px;">-</div>
<div class="t" style="top:605.29px;font-size:12.3px;right:978px;">-</div>
<div class="t" style="top:605.29px;font-size:12.3px;right:889px;">-</div>
<div class="t" style="top:605.29px;font-size:12.3px;right:800px;">-</div>
<div class="t" style="top:605.29px;font-size:12.3px;right:711px;">-</div>
<div class="t" style="top:605.29px;font-size:12.3px;right:620.5px;">50</div>
<div class="t" style="top:605.29px;font-size:12.3px;right:531.5px;">79</div>
<div class="t" style="top:605.29px;font-size:12.3px;right:442.5px;">643</div>
<div class="t" style="top:605.29px;font-size:12.3px;right:353.5px;">642</div>
<div class="t" style="top:605.29px;font-size:12.3px;right:266px;">-</div>
<div class="t" style="top:605.29px;font-size:12.3px;right:177px;">-</div>
<div class="t" style="top:605.29px;font-size:12.3px;right:88px;">-</div>
<div class="t" style="top:622.20px;font-size:12.4px;left:110px;">Total - Injections</div>
<div class="t" style="top:622.29px;font-size:12.3px;left:582px;transform:scaleX(0.86);transform-origin:0 0;">USD k</div>
<div class="t" style="top:622.29px;font-size:12.3px;right:1175.5px;">1,414</div>
<div class="t" style="top:622.29px;font-size:12.3px;right:1084.5px;">1,414</div>
<div class="t" style="top:622.29px;font-size:12.3px;right:978px;">-</div>
<div class="t" style="top:622.29px;font-size:12.3px;right:889px;">-</div>
<div class="t" style="top:622.29px;font-size:12.3px;right:800px;">-</div>
<div class="t" style="top:622.29px;font-size:12.3px;right:711px;">-</div>
<div class="t" style="top:622.29px;font-size:12.3px;right:620.5px;">50</div>
<div class="t" style="top:622.29px;font-size:12.3px;right:531.5px;">79</div>
<div class="t" style="top:622.29px;font-size:12.3px;right:442.5px;">643</div>
<div class="t" style="top:622.29px;font-size:12.3px;right:353.5px;">642</div>
<div class="t" style="top:622.29px;font-size:12.3px;right:266px;">-</div>
<div class="t" style="top:622.29px;font-size:12.3px;right:177px;">-</div>
<div class="t" style="top:622.29px;font-size:12.3px;right:88px;">-</div>
<div class="t" style="top:763.20px;font-size:12.4px;left:110px;">Equity redemption</div>
<div class="t" style="top:763.29px;font-size:12.3px;right:1351.5px;">-</div>
<div class="t" style="top:763.29px;font-size:12.3px;left:582px;transform:scaleX(0.86);transform-origin:0 0;">USD k</div>
<div class="t" style="top:763.29px;font-size:12.3px;right:1177px;">-</div>
<div class="t" style="top:763.29px;font-size:12.3px;right:1084.5px;">20,793</div>
<div class="t" style="top:763.29px;font-size:12.3px;right:1066.5px;">-</div>
<div class="t" style="top:763.29px;font-size:12.3px;right:978px;">-</div>
<div class="t" style="top:763.29px;font-size:12.3px;right:889px;">-</div>
<div class="t" style="top:763.29px;font-size:12.3px;right:800px;">-</div>
<div class="t" style="top:763.29px;font-size:12.3px;right:711px;">-</div>
<div class="t" style="top:763.29px;font-size:12.3px;right:622px;">-</div>
<div class="t" style="top:763.29px;font-size:12.3px;right:533px;">-</div>
<div class="t" style="top:763.29px;font-size:12.3px;right:444px;">-</div>
<div class="t" style="top:763.29px;font-size:12.3px;right:355px;">-</div>
<div class="t" style="top:763.29px;font-size:12.3px;right:266px;">-</div>
<div class="t" style="top:763.29px;font-size:12.3px;right:177px;">-</div>
<div class="t" style="top:763.29px;font-size:12.3px;right:88px;">-</div>
<div class="t" style="top:780.20px;font-size:12.4px;left:110px;">Total - Redemption</div>
<div class="t" style="top:780.29px;font-size:12.3px;left:582px;transform:scaleX(0.86);transform-origin:0 0;">USD k</div>
<div class="t" style="top:780.29px;font-size:12.3px;right:1177px;">-</div>
<div class="t" style="top:780.29px;font-size:12.3px;right:1084.5px;">20,793</div>
<div class="t" style="top:780.29px;font-size:12.3px;right:978px;">-</div>
<div class="t" style="top:780.29px;font-size:12.3px;right:889px;">-</div>
<div class="t" style="top:780.29px;font-size:12.3px;right:800px;">-</div>
<div class="t" style="top:780.29px;font-size:12.3px;right:711px;">-</div>
<div class="t" style="top:780.29px;font-size:12.3px;right:622px;">-</div>
<div class="t" style="top:780.29px;font-size:12.3px;right:533px;">-</div>
<div class="t" style="top:780.29px;font-size:12.3px;right:444px;">-</div>
<div class="t" style="top:780.29px;font-size:12.3px;right:355px;">-</div>
<div class="t" style="top:780.29px;font-size:12.3px;right:266px;">-</div>
<div class="t" style="top:780.29px;font-size:12.3px;right:177px;">-</div>
<div class="t" style="top:780.29px;font-size:12.3px;right:88px;">-</div>
<div class="r" style="left:860px;top:270px;width:92px;height:1px;background:#217346;"></div>
<div class="r" style="left:860px;top:270px;width:2px;height:21px;background:#217346;"></div>
<div class="r" style="left:950px;top:270px;width:2px;height:16px;background:#217346;"></div>
<div class="r" style="left:860px;top:289px;width:86px;height:2px;background:#217346;"></div>
<div class="r" style="left:946px;top:286px;width:8px;height:1px;background:#fff;"></div>
<div class="r" style="left:946px;top:286px;width:1px;height:6px;background:#fff;"></div>
<div class="r" style="left:947px;top:287px;width:6px;height:5px;background:#217346;"></div>
<div class="r" style="left:1895px;top:136px;width:25px;height:916px;background:#e6e6e6;"></div>
<div class="r" style="left:1898px;top:138px;width:19px;height:19px;background:#fff;border:1px solid #ababab;box-sizing:border-box;"></div>
<svg style="left:1902px;top:144px" width="11" height="7"><path d="M0 6 L5.5 0 L11 6 Z" fill="#6d6d6d"/></svg>
<div class="r" style="left:1898px;top:157px;width:19px;height:831px;background:#fff;border:1px solid #ababab;box-sizing:border-box;"></div>
<div class="r" style="left:1898px;top:988px;width:19px;height:16px;background:#dadada;"></div>
<div class="r" style="left:1898px;top:1004px;width:19px;height:19px;background:#fff;border:1px solid #ababab;box-sizing:border-box;"></div>
<svg style="left:1902px;top:1011px" width="11" height="7"><path d="M0 0 L5.5 6 L11 0 Z" fill="#6d6d6d"/></svg>
<div class="r" style="left:0px;top:1024px;width:1920px;height:28px;background:#e6e6e6;"></div>
<div class="r" style="left:0px;top:1023px;width:1895px;height:1px;background:#9a9a9a;"></div>
<svg style="left:27px;top:1033px" width="6" height="9"><path d="M5.5 0 V9 L0 4.5 Z" fill="#1e6b3f"/></svg>
<svg style="left:56.5px;top:1033px" width="6" height="9"><path d="M0 0 V9 L5.5 4.5 Z" fill="#1e6b3f"/></svg>
<div class="r" style="left:82px;top:1038px;width:2px;height:2px;background:#0b5a2a;"></div>
<div class="r" style="left:87px;top:1038px;width:2px;height:2px;background:#0b5a2a;"></div>
<div class="r" style="left:92px;top:1038px;width:2px;height:2px;background:#0b5a2a;"></div>
<div class="r" style="left:103px;top:1027px;width:1px;height:21px;background:#b4b4b4;"></div>
<div class="r" style="left:106px;top:1026px;width:83px;height:23px;background:#bfbfbf;"></div>
<div class="r" style="left:191px;top:1027px;width:1px;height:21px;background:#b4b4b4;"></div>
<div class="t" style="top:1026.20px;font-size:16.3px;color:#222;left:-153.5px;width:600px;text-align:center;">Convert</div>
<div class="r" style="left:193px;top:1026px;width:60px;height:23px;background:#bfbfbf;"></div>
<div class="r" style="left:255px;top:1027px;width:1px;height:21px;background:#b4b4b4;"></div>
<div class="t" style="top:1026.20px;font-size:16.3px;color:#222;left:-78.0px;width:600px;text-align:center;">Flags</div>
<div class="r" style="left:258px;top:1026px;width:98px;height:23px;background:#bfbfbf;"></div>
<div class="r" style="left:358px;top:1027px;width:1px;height:21px;background:#b4b4b4;"></div>
<div class="t" style="top:1026.20px;font-size:16.3px;color:#222;left:6.0px;width:600px;text-align:center;">Escalation</div>
<div class="r" style="left:361px;top:1026px;width:80px;height:23px;background:#bfbfbf;"></div>
<div class="r" style="left:443px;top:1027px;width:1px;height:21px;background:#b4b4b4;"></div>
<div class="t" style="top:1026.20px;font-size:16.3px;color:#222;left:100.0px;width:600px;text-align:center;">Volume</div>
<div class="r" style="left:446px;top:1026px;width:64px;height:23px;background:#bfbfbf;"></div>
<div class="r" style="left:512px;top:1027px;width:1px;height:21px;background:#b4b4b4;"></div>
<div class="t" style="top:1026.20px;font-size:16.3px;color:#222;left:177.0px;width:600px;text-align:center;">Tariff</div>
<div class="r" style="left:515px;top:1026px;width:86px;height:23px;background:#bfbfbf;"></div>
<div class="r" style="left:603px;top:1027px;width:1px;height:21px;background:#b4b4b4;"></div>
<div class="t" style="top:1026.20px;font-size:16.3px;color:#222;left:257.0px;width:600px;text-align:center;">Revenue</div>
<div class="r" style="left:606px;top:1026px;width:59px;height:23px;background:#bfbfbf;"></div>
<div class="r" style="left:667px;top:1027px;width:1px;height:21px;background:#b4b4b4;"></div>
<div class="t" style="top:1026.20px;font-size:16.3px;color:#222;left:334.5px;width:600px;text-align:center;">Costs</div>
<div class="r" style="left:670px;top:1026px;width:64px;height:23px;background:#bfbfbf;"></div>
<div class="r" style="left:736px;top:1027px;width:1px;height:21px;background:#b4b4b4;"></div>
<div class="t" style="top:1026.20px;font-size:16.3px;color:#222;left:401.0px;width:600px;text-align:center;">Opex</div>
<div class="r" style="left:739px;top:1026px;width:65px;height:23px;background:#bfbfbf;"></div>
<div class="r" style="left:806px;top:1027px;width:1px;height:21px;background:#b4b4b4;"></div>
<div class="t" style="top:1026.20px;font-size:16.3px;color:#222;left:470.5px;width:600px;text-align:center;">Capex</div>
<div class="r" style="left:809px;top:1026px;width:98px;height:23px;background:#bfbfbf;"></div>
<div class="r" style="left:909px;top:1027px;width:1px;height:21px;background:#b4b4b4;"></div>
<div class="t" style="top:1026.20px;font-size:16.3px;color:#222;left:557.0px;width:600px;text-align:center;">Financing</div>
<div class="r" style="left:912px;top:1026px;width:57px;height:23px;background:#bfbfbf;"></div>
<div class="r" style="left:971px;top:1027px;width:1px;height:21px;background:#b4b4b4;"></div>
<div class="t" style="top:1026.20px;font-size:16.3px;color:#222;left:639.5px;width:600px;text-align:center;">Debt</div>
<div class="r" style="left:973px;top:1023px;width:76px;height:26px;background:#fff;"></div>
<div class="r" style="left:973px;top:1023px;width:1px;height:26px;background:#9a9a9a;"></div>
<div class="r" style="left:1048px;top:1023px;width:1px;height:26px;background:#9a9a9a;"></div>
<div class="r" style="left:974px;top:1046px;width:74px;height:2px;background:#217346;"></div>
<div class="t" style="top:1026.20px;font-size:16.3px;font-weight:700;color:#217346;left:710.5px;width:600px;text-align:center;">Equity</div>
<div class="r" style="left:1051px;top:1026px;width:27px;height:23px;background:#bfbfbf;"></div>
<div class="r" style="left:1051px;top:1026px;width:27px;height:23px;overflow:hidden;"><div class="t" style="left:10px;top:-0.5px;font-size:16.3px;color:#222;">Re</div></div>
<div class="r" style="left:1086px;top:1038px;width:2px;height:2px;background:#0b5a2a;"></div>
<div class="r" style="left:1091px;top:1038px;width:2px;height:2px;background:#0b5a2a;"></div>
<div class="r" style="left:1096px;top:1038px;width:2px;height:2px;background:#0b5a2a;"></div>
<svg style="left:1110px;top:1027px" width="22" height="22" viewBox="0 0 22 22"><g fill="none" stroke="#6d6d6d" stroke-width="1.3"><circle cx="11" cy="11" r="9.5"/><path d="M11 5.5 V16.5 M5.5 11 H16.5" stroke-width="1.6"/></g></svg>
<div class="r" style="left:1149px;top:1032px;width:3px;height:3px;background:#b4b4b4;"></div>
<div class="r" style="left:1149px;top:1037px;width:3px;height:3px;background:#b4b4b4;"></div>
<div class="r" style="left:1149px;top:1042px;width:3px;height:3px;background:#b4b4b4;"></div>
<div class="r" style="left:1167px;top:1028px;width:726px;height:19px;background:#d9d9d9;"></div>
<div class="r" style="left:1167px;top:1028px;width:19px;height:19px;background:#fff;border:1px solid #ababab;box-sizing:border-box;"></div>
<svg style="left:1172px;top:1033px" width="6" height="10"><path d="M6 0 V10 L0 5 Z" fill="#6d6d6d"/></svg>
<div class="r" style="left:1186px;top:1028px;width:69px;height:19px;background:#fff;border:1px solid #ababab;box-sizing:border-box;"></div>
<div class="r" style="left:1874px;top:1028px;width:19px;height:19px;background:#fff;border:1px solid #ababab;box-sizing:border-box;"></div>
<svg style="left:1882px;top:1033px" width="6" height="10"><path d="M0 0 V10 L6 5 Z" fill="#6d6d6d"/></svg>
<div class="r" style="left:0px;top:1052px;width:1920px;height:28px;background:#f3f2f1;"></div>
<div class="r" style="left:0px;top:1052px;width:1920px;height:1px;background:#d6d6d6;"></div>
<div class="t" style="top:1061.33px;font-size:12.6px;color:#444;left:9.5px;">Ready</div>
<svg style="left:70px;top:1058px" width="19" height="17" viewBox="0 0 19 17"><g fill="#5a5a5a"><rect x="0" y="0" width="18" height="2.6"/><rect x="0" y="0" width="2" height="16"/><rect x="0" y="14" width="7" height="2"/><rect x="16" y="0" width="2" height="5"/><rect x="3" y="5" width="3" height="1.5"/><rect x="3" y="8" width="3" height="1.5"/><rect x="3" y="11" width="3" height="1.5"/><circle cx="12" cy="10.8" r="2.2"/></g><circle cx="12" cy="10.8" r="5" fill="none" stroke="#5a5a5a" stroke-width="1.7"/></svg>
<div class="r" style="left:1556px;top:1053px;width:49px;height:25px;background:#d2d2d2;"></div>
<svg style="left:1571px;top:1057px" width="17" height="17" viewBox="0 0 17 17"><rect x="0" y="0" width="17" height="17" fill="#5f5f5f"/><g fill="#d2d2d2"><rect x="2" y="2" width="3" height="3"/><rect x="7" y="2" width="3" height="3"/><rect x="12" y="2" width="3" height="3"/><rect x="2" y="7" width="3" height="3"/><rect x="7" y="7" width="3" height="3"/><rect x="12" y="7" width="3" height="3"/><rect x="2" y="12" width="3" height="3"/><rect x="7" y="12" width="3" height="3"/><rect x="12" y="12" width="3" height="3"/></g></svg>
<svg style="left:1621px;top:1057px" width="18" height="17" viewBox="0 0 18 17"><g fill="none" stroke="#6a6a6a" stroke-width="1.4"><rect x="0.7" y="0.7" width="16.6" height="15.6"/><rect x="4" y="3.5" width="10" height="10"/><path d="M6 6.5 H12 M6 9 H12 M6 11.5 H12"/></g></svg>
<svg style="left:1671px;top:1057px" width="18" height="17" viewBox="0 0 18 17"><g fill="none" stroke="#6a6a6a" stroke-width="1.4"><rect x="0.7" y="0.7" width="16.6" height="15.6"/><path d="M4.5 0.7 V8.5 H10.5 V0.7 M7.5 0.7 V8.5"/></g></svg>
<div class="r" style="left:1712px;top:1065px;width:9px;height:1px;background:#555;"></div>
<div class="r" style="left:1728px;top:1066px;width:125px;height:1px;background:#a0a0a0;"></div>
<div class="r" style="left:1775px;top:1059px;width:6px;height:14px;background:#6a6a6a;"></div>
<div class="r" style="left:1790px;top:1063px;width:1px;height:7px;background:#a0a0a0;"></div>
<div class="r" style="left:1859px;top:1065px;width:9px;height:1px;background:#555;"></div>
<div class="r" style="left:1863px;top:1061px;width:1px;height:10px;background:#555;"></div>
<div class="t" style="top:1060.50px;font-size:12.4px;color:#444;left:1885px;">80%</div>
<div class="r" style="left:0px;top:1078px;width:60px;height:2px;background:#3a3a3a;"></div>
<div class="r" style="left:60px;top:1078px;width:430px;height:1px;background:#bdbdbd;"></div>
<div class="r" style="left:490px;top:1078px;width:1430px;height:2px;background:#3a3a3a;"></div>
<div class="r" style="left:864px;top:1078px;width:56px;height:2px;background:#6a6a6a;"></div>
</body></html>
